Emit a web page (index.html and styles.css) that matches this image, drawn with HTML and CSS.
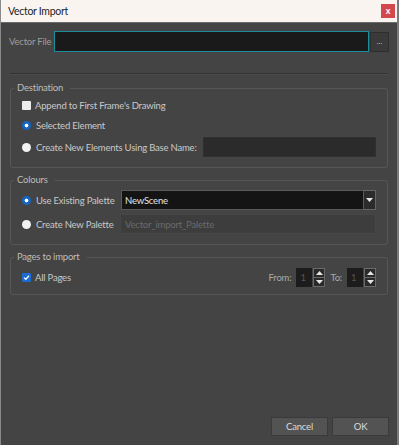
FILE: index.html
```html
<!DOCTYPE html>
<html>
<head>
<meta charset="utf-8">
<link rel="stylesheet" href="styles.css">
</head>
<body>
<div class="window">
  <div class="titlebar">
    <span class="title">Vector Import</span>
    <span class="close">x</span>
  </div>
  <div class="content">
    <div class="file-row">
      <span class="file-label">Vector File</span>
      <div class="file-input"></div>
      <div class="browse">...</div>
    </div>
    <div class="sep"></div>

    <fieldset class="group dest">
      <legend>Destination</legend>
      <div class="row">
        <span class="check"></span><span class="txt">Append to First Frame's Drawing</span>
      </div>
      <div class="row">
        <span class="radio on"></span><span class="txt">Selected Element</span>
      </div>
      <div class="row row-gap">
        <span class="opt opt-wide"><span class="radio"></span><span class="txt">Create New Elements Using Base Name:</span></span>
        <div class="field base-name"></div>
      </div>
    </fieldset>

    <fieldset class="group colours">
      <legend>Colours</legend>
      <div class="row">
        <span class="opt"><span class="radio on"></span><span class="txt">Use Existing Palette</span></span>
        <div class="combo">
          <span class="combo-text">NewScene</span>
          <span class="combo-btn"><svg width="7" height="4" viewBox="0 0 7 4"><path d="M0 0H7L3.5 4Z" fill="#e6e6e6"/></svg></span>
        </div>
      </div>
      <div class="row row-gap4">
        <span class="opt"><span class="radio"></span><span class="txt">Create New Palette</span></span>
        <div class="field palette-name">Vector_import_Palette</div>
      </div>
    </fieldset>

    <fieldset class="group pages">
      <legend>Pages to import</legend>
      <div class="row">
        <span class="check checked"><svg width="9" height="9" viewBox="0 0 9 9"><path d="M2 4.6L3.8 6.3L7 2.8" fill="none" stroke="#fff" stroke-width="1.3"/></svg></span><span class="txt">All Pages</span>
        <div class="spacer"></div>
        <span class="txt dim">From:</span>
        <div class="spin">
          <span class="spin-val">1</span>
          <span class="spin-btns">
            <span class="spin-btn"><svg width="7" height="4" viewBox="0 0 7 4"><path d="M0 4H7L3.5 0Z" fill="#e6e6e6"/></svg></span>
            <span class="spin-btn"><svg width="7" height="4" viewBox="0 0 7 4"><path d="M0 0H7L3.5 4Z" fill="#e6e6e6"/></svg></span>
          </span>
        </div>
        <span class="txt dim to">To:</span>
        <div class="spin">
          <span class="spin-val">1</span>
          <span class="spin-btns">
            <span class="spin-btn"><svg width="7" height="4" viewBox="0 0 7 4"><path d="M0 4H7L3.5 0Z" fill="#e6e6e6"/></svg></span>
            <span class="spin-btn"><svg width="7" height="4" viewBox="0 0 7 4"><path d="M0 0H7L3.5 4Z" fill="#e6e6e6"/></svg></span>
          </span>
        </div>
      </div>
    </fieldset>

    <div class="grow"></div>
    <div class="buttons">
      <div class="btn">Cancel</div>
      <div class="btn">OK</div>
    </div>
  </div>
</div>
</body>
</html>
```

FILE: styles.css
```css
* { box-sizing: border-box; }
html, body { margin: 0; padding: 0; background: #444; }
body { font-family: Lato, "Open Sans", sans-serif; font-size: 9.5px; letter-spacing: -0.2px; color: #c9c9c9; }

.window {
  width: 399px; height: 445px;
  display: flex; flex-direction: column;
  border-left: 1px solid #8a8a8a;
  border-right: 2px solid #7a7a7a;
  background: #444;
}
.titlebar {
  height: 23px; flex: none;
  background: #faf4f1;
  display: flex; align-items: center;
  padding: 0 2px 0 7px;
  border-bottom: 1px solid #6a6a6a;
}
.title { flex: 1; font-size: 10.5px; letter-spacing: -0.3px; color: #1e1e1e; }
.close {
  width: 14px; height: 14px;
  background: #d2484b;
  color: #fff; font-size: 9px; font-weight: bold; letter-spacing: 0;
  display: flex; align-items: center; justify-content: center;
  line-height: 1; padding-bottom: 1px;
}

.content {
  flex: 1;
  display: flex; flex-direction: column;
  padding: 8px 8px 9px 8px;
}

.file-row { display: flex; align-items: center; height: 21px; }
.file-label { width: 45px; flex: none; white-space: nowrap; color: #9d9d9d; }
.file-input {
  flex: 1; height: 21px;
  background: #1a1a1a;
  border: 1px solid #1d8d9b;
}
.browse {
  width: 19px; height: 20px; margin-left: 1px;
  background: #3a3a3a;
  border: 1px solid #2e2e2e;
  color: #bbb; font-size: 8px; letter-spacing: 0;
  display: flex; align-items: center; justify-content: center;
  padding-bottom: 2px;
}
.sep { height: 2px; margin: 21px 1px 0; border-top: 1px solid #333; border-bottom: 1px solid #4c4c4c; }

.group {
  margin: 0 1px;
  border: 1px solid #575757;
  border-radius: 3px;
  padding: 0 11px 0 11px;
  display: flex; flex-direction: column;
}
.group legend {
  padding: 0 7px 0 3px;
  margin-left: -8px;
  color: #bdbdbd;
  line-height: 14px;
}
.dest { margin-top: 6px; padding-top: 0; padding-bottom: 10px; }
.colours { margin-top: 5px; padding-top: 3px; padding-bottom: 10px; }
.pages { margin-top: 5px; padding-top: 3px; padding-bottom: 7px; }

.row { display: flex; align-items: center; height: 20px; }
.row-gap { margin-top: 2px; }
.row-gap4 { margin-top: 4px; }
.opt { display: flex; align-items: center; flex: none; width: 98px; }
.opt-wide { width: 181px; }
.txt { white-space: nowrap; }
.dim { color: #a9a9a9; }
.to { margin-left: 5px; }
.spacer { flex: 1; }

.check {
  width: 9px; height: 9px; margin-right: 4px; flex: none;
  background: #ececec; border-radius: 1px;
  display: flex; align-items: center; justify-content: center;
}
.check.checked { background: #1c6bd0; }
.radio {
  width: 9px; height: 9px; margin-right: 5px; flex: none;
  border-radius: 50%;
  background: #f2f2f2;
}
.radio.on { background: radial-gradient(circle, #fff 0 1.6px, #1565c4 2.2px); }

.field { flex: 1; height: 20px; }
.base-name { background: #2b2b2b; border: 1px solid #303030; }
.palette-name {
  background: #3d3d3d; border: 1px solid #464646;
  color: #6a6a6a; padding-left: 4px;
  display: flex; align-items: center;
}
.combo { flex: 1; height: 20px; display: flex; margin-left: 1px; }
.combo-text {
  flex: 1; background: #141414;
  border: 1px solid #5a5a5a;
  color: #e4e4e4; padding-left: 3px;
  display: flex; align-items: center;
}
.combo-btn {
  width: 12px; background: #2b2b2b;
  border: 1px solid #666; border-left: none;
  display: flex; align-items: center; justify-content: center;
}

.spin { display: flex; height: 19px; margin-left: 5px; }
.spin-val {
  width: 16px; background: #1c1c1c;
  color: #555; padding-left: 4px;
  display: flex; align-items: center;
}
.spin-btns { display: flex; flex-direction: column; width: 12px; margin-left: 1px; }
.spin-btn {
  flex: 1; background: #2a2a2a;
  border: 1px solid #6a6a6a;
  display: flex; align-items: center; justify-content: center;
}
.spin-btn + .spin-btn { border-top: none; }

.grow { flex: 1; }
.buttons { display: flex; justify-content: flex-end; gap: 4px; }
.btn {
  width: 57px; height: 19px;
  background: #535353;
  border: 1px solid #3a3a3a;
  color: #dcdcdc;
  display: flex; align-items: center; justify-content: center;
}
```
